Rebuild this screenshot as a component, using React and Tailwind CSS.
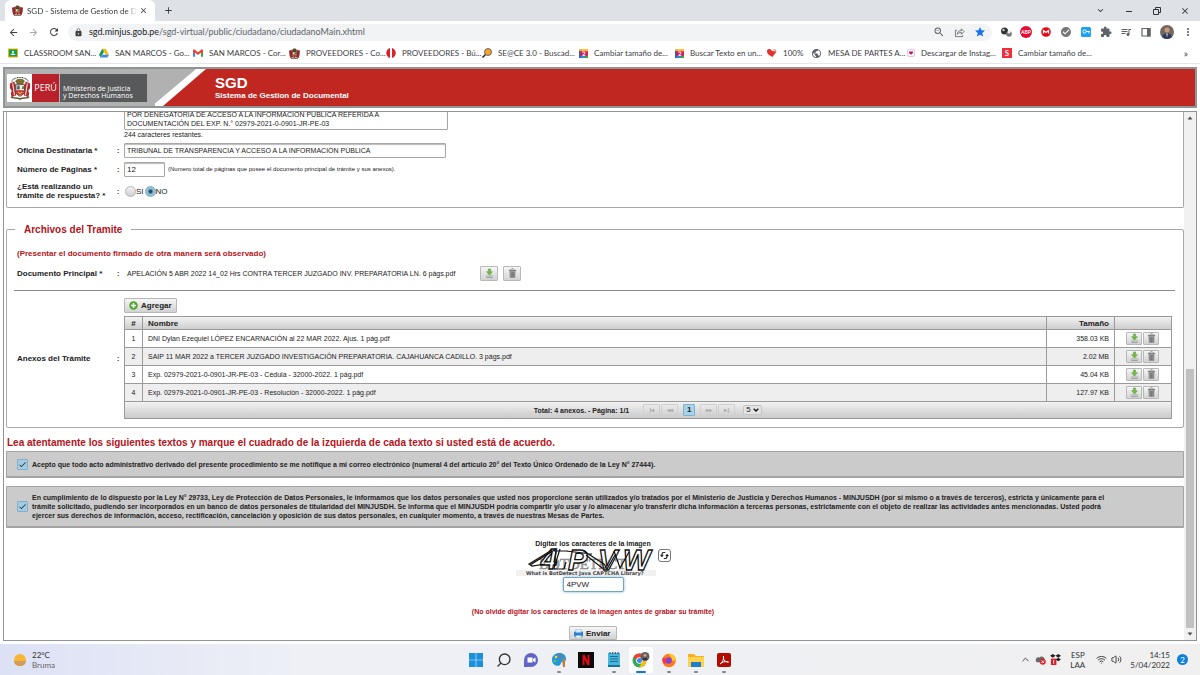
import React from "react";
import {
  MdArrowBack, MdArrowForward, MdRefresh, MdLock, MdZoomOut, MdStar, MdExtension, MdMoreVert,
  MdQueueMusic, MdAdd, MdClose, MdKeyboardArrowDown, MdPublic, MdCheckCircle, MdCheck,
} from "react-icons/md";
import { Wifi, Volume2, Search, ChevronUp } from "lucide-react";

const shine = "border border-[#b8b8b8] bg-linear-to-b from-[#f6f6f6] to-[#d2d2d2]";

function Crest({ className }) {
  return (
    <svg viewBox="0 0 24 26" className={className} aria-hidden="true">
      <path d="M3 6C5 0 19 0 21 6" fill="none" stroke="#444" strokeWidth="1.200" strokeDasharray="1.200 .6" />
      <path d="M7 6c0-4 10-4 10 0l-2 3H9z" fill="#5f6f35" />
      <path d="M9 4h6v4H9z" fill="#8a6a2c" />
      <path d="M1 8l5-2 2 15-5 2-1-4 1-3-2-3zM23 8l-5-2-2 15 5 2 1-4-1-3 2-3z" fill="#b3242b" />
      <path d="M4 8l2 13M20 8l-2 13" stroke="#e8e4df" strokeWidth="1.200" />
      <path d="M7 9h10v7c0 3-3 5-5 6-2-1-5-3-5-6z" fill="#f3efe6" stroke="#5a2f1c" strokeWidth="1" />
      <path d="M7.500 9.500H12V15H7.500z" fill="#8cb6cf" />
      <path d="M8.500 14l1-3h2v3z" fill="#7a5630" />
      <path d="M14 14l1-4 1.500 2-.5 2z" fill="#4b7b35" />
      <path d="M7.500 15.500h9c0 3-2.500 5-4.500 6-2-1-4.500-3-4.500-6z" fill="#c0272d" />
      <path d="M10 17l2 2.500 2.500-2.500" stroke="#e5b84a" strokeWidth="1.300" fill="none" />
      <path d="M2 23c4 2 6 0 10 2 4-2 6 0 10-2" stroke="#5b5b33" strokeWidth="1.600" fill="none" />
    </svg>
  );
}

function MiniCrest() {
  return (
    <svg viewBox="0 0 24 24" className="size-[11px]" aria-hidden="true">
      <path d="M7 5c0-5 10-5 10 0l-2 4H9z" fill="#5c4a26" />
      <path d="M0 6l6-2 3 16-6 2-2-6zM24 6l-6-2-3 16 6 2 2-6z" fill="#9e2a2e" />
      <path d="M7 8h10v8l-5 6-5-6z" fill="#e6d9c4" stroke="#4d2518" strokeWidth="1.800" />
      <path d="M8 14h8l-4 7z" fill="#cc2229" />
      <path d="M12 9h4v5h-4z" fill="#4f7d43" />
      <path d="M4 22c5 2 11 2 16 0" stroke="#4a4a28" strokeWidth="2" fill="none" />
    </svg>
  );
}

function DownloadGlyph() {
  return (
    <svg viewBox="0 0 12 12" className="size-[11px]" aria-hidden="true">
      <path d="M2 7.500h8v3H2z" fill="#c4c4c4" />
      <path d="M2.500 9.800h7V11h-7z" fill="#a3a3a3" />
      <path d="M4.800 1h2.400v3h2L6 7.800 2.800 4h2z" fill="#74b84a" stroke="#4f9a32" strokeWidth=".5" />
    </svg>
  );
}

function TrashGlyph() {
  return (
    <svg viewBox="0 0 12 12" className="size-[11px]" aria-hidden="true">
      <path d="M4.500 1.500c0-1 3-1 3 0" fill="none" stroke="#7d7d7d" />
      <path d="M2 1.900h8v1.300H2z" fill="#7d7d7d" />
      <path d="M2.600 3.400h6.800L9 11H3z" fill="#9a9a9a" />
      <path d="M4.500 4.500v5.500M6 4.500v5.500M7.500 4.500v5.500" stroke="#666" strokeWidth=".7" />
    </svg>
  );
}

function IconButton({ label, children, className = "h-[13px] w-4" }) {
  return (
    <button aria-label={label} className={`flex items-center justify-center rounded-[1px] ${shine} ${className}`}>
      {children}
    </button>
  );
}

const drive = (
  <svg viewBox="0 0 24 22" className="size-[10px]">
    <path d="M8 1h8l8 14h-8z" fill="#fbbc04" /><path d="M8 1l4 7-8 14-4-7z" fill="#0f9d58" /><path d="M8 15h16l-4 7H4z" fill="#4285f4" />
  </svg>
);
const gmail = (
  <svg viewBox="0 0 24 18" className="size-[10px]">
    <path d="M0 2h5v16H0z" fill="#4285f4" /><path d="M19 2h5v16h-5z" fill="#34a853" /><path d="M0 2l3-2 9 7 9-7 3 2v5l-5 4V8l-7 5.500L5 8v3L0 7z" fill="#ea4335" />
  </svg>
);
const classroom = (
  <svg viewBox="0 0 20 18" className="size-[10px]">
    <path d="M0 0h20v18H0z" fill="#f4b400" /><path d="M2 2h16v14H2z" fill="#0f9d58" /><circle cx="10" cy="7" r="2.200" fill="#fff" /><path d="M5 13c1-4 9-4 10 0z" fill="#fff" />
  </svg>
);
const osce = (
  <svg viewBox="0 0 20 20" className="size-[10px]">
    <path d="M8 0C-2 3-2 17 8 20zM12 0c10 3 10 17 0 20z" fill="#d8232a" />
  </svg>
);
const magnifier = (
  <svg viewBox="0 0 20 20" className="size-[10px]">
    <path d="M1 19l6-6" stroke="#222" strokeWidth="3" /><circle cx="12" cy="8" r="7" fill="#f2a52c" stroke="#444" strokeWidth="1.500" />
  </svg>
);
const ilove = (
  <svg viewBox="0 0 20 20" className="size-[9px]">
    <path d="M0 0h20v6H0z" fill="#fbc02d" /><path d="M0 4h5v16H0z" fill="#3a57c9" /><path d="M3 5h17v11H3z" fill="#d81b60" /><path d="M10 15h10v5H10z" fill="#43a047" /><path d="M3 15h8v5H3z" fill="#1e88e5" /><path d="M7 7h6v3L8 14h6" fill="none" stroke="#fff" strokeWidth="2" />
  </svg>
);
const heart = (
  <svg viewBox="0 0 20 20" className="size-[10px]">
    <path d="M0 7c0-6 7-6 9-2l2 1 8 1-8 11C5 15 0 12 0 7z" fill="#e5322d" /><path d="M12 4l3-2v3zM16 3l3 1-2 2z" fill="#e5322d" />
  </svg>
);
const insta = (
  <svg viewBox="0 0 20 20" className="size-[8px]">
    <rect x="1" y="1" width="18" height="18" rx="5" fill="#fff" stroke="#e58ab0" strokeWidth="1.500" /><path d="M5 8c0-4 5-3 5 0 0-3 5-4 5 0 0 3-5 6-5 6s-5-3-5-6z" fill="#c2185b" />
  </svg>
);

const bookmarks = [
  { icon: classroom, text: "CLASSROOM SAN...", w: "w-[91px]" },
  { icon: drive, text: "SAN MARCOS - Go...", w: "w-[94px]" },
  { icon: gmail, text: "SAN MARCOS - Cor...", w: "w-[96px]" },
  { icon: <MiniCrest />, text: "PROVEEDORES - Co...", w: "w-[97px]" },
  { icon: osce, text: "PROVEEDORES - Bú...", w: "w-[96px]" },
  { icon: magnifier, text: "SE@CE 3.0 - Buscad...", w: "w-[97px]" },
  { icon: ilove, text: "Cambiar tamaño de...", w: "w-[96px]" },
  { icon: ilove, text: "Buscar Texto en un...", w: "w-[92px]" },
  { icon: heart, text: "100%", w: "w-[44px]" },
  { icon: <MdPublic className="size-[11px] text-[#5f6368]" />, text: "MESA DE PARTES A...", w: "w-[96px]" },
  { icon: insta, text: "Descargar de Instag...", w: "w-[95px]" },
  { icon: <span className="flex size-[10px] items-center justify-center bg-[#ee2e3a] text-[8px] font-bold text-white">S</span>, text: "Cambiar tamaño de...", w: "w-[96px]" },
];

function Browser() {
  return (
    <header className="font-['Lato',sans-serif] text-[#3c4043]">
      <div className="flex h-[21px] bg-[#dee1e6]">
        <div className="ml-[5px] flex w-[150px] items-center rounded-t-md bg-white pl-[7px]">
          <MiniCrest />
          <span className="ml-1 w-[110px] overflow-hidden mask-r-from-90% text-[8px] leading-3 whitespace-nowrap">SGD - Sistema de Gestion de Documental</span>
          <button aria-label="Cerrar pestaña" className="ml-[2px]"><MdClose className="size-[9px]" /></button>
        </div>
        <button aria-label="Nueva pestaña" className="ml-2"><MdAdd className="size-[11px]" /></button>
        <div className="ml-auto flex items-center gap-[18px] pr-[10px] text-[#333]">
          <button aria-label="Buscar pestañas"><MdKeyboardArrowDown className="size-[11px]" /></button>
          <button aria-label="Minimizar"><svg viewBox="0 0 10 10" className="size-[10px]"><path d="M2 5.500h6" stroke="#333" /></svg></button>
          <button aria-label="Restaurar"><svg viewBox="0 0 10 10" className="size-[10px]" fill="none" stroke="#333"><path d="M1.500 3.500h5v5h-5zM3.500 3V1.500h5v5H7" /></svg></button>
          <button aria-label="Cerrar"><MdClose className="size-[10px]" /></button>
        </div>
      </div>
      <div className="flex h-[22px] items-center bg-white pr-[6px]">
        <div className="flex w-[68px] items-center gap-[9px] pl-2">
          <button aria-label="Atrás"><MdArrowBack className="size-[11px]" /></button>
          <button aria-label="Adelante"><MdArrowForward className="size-[11px] text-[#a5a8ac]" /></button>
          <button aria-label="Recargar"><MdRefresh className="size-[12px]" /></button>
        </div>
        <div className="flex h-[17px] flex-1 items-center rounded-full bg-[#f1f3f4] pr-[6px] pl-[6px]">
          <MdLock className="size-[9px]" />
          <span className="ml-[6px] text-[9px] leading-3 whitespace-nowrap text-[#5f6368]"><span className="text-[#202124]">sgd.minjus.gob.pe</span>/sgd-virtual/public/ciudadano/ciudadanoMain.xhtml</span>
          <span className="ml-auto flex items-center gap-[9px] text-[#5f6368]">
            <MdZoomOut className="size-[12px]" />
            <svg viewBox="0 0 12 12" className="size-[11px]" fill="none" stroke="currentColor" strokeWidth=".9"><path d="M3.500 3.500h-2v7h8V9M3.500 8c0-3 2-4 4.500-4V2l3 3-3 3V6C6 6 4.500 6.500 3.500 8z" /></svg>
            <MdStar className="size-[12px] text-[#1a73e8]" />
          </span>
        </div>
        <div className="ml-2 flex items-center gap-[8px] text-[#5f6368]">
          <svg viewBox="0 0 12 12" className="size-3"><circle cx="4.500" cy="5" r="3.500" fill="#333" /><circle cx="3.500" cy="4" r="1.200" fill="#ccc" /><circle cx="9" cy="8" r="2.800" fill="#777" /><circle cx="9" cy="6" r="1.500" fill="#eee" /></svg>
          <span className="flex size-3 items-center justify-center rounded-full bg-[#e40d35] text-[5px] font-bold text-white">ABP</span>
          <svg viewBox="0 0 12 12" className="size-3"><circle cx="6" cy="6" r="4.800" fill="#e50914" /><path d="M3.500 7.500v-3L6 6.500l2.500-2v3" stroke="#fff" strokeWidth="1.300" fill="none" /></svg>
          <MdCheckCircle className="size-3 text-[#777]" />
          <svg viewBox="0 0 12 12" className="size-3"><rect x="1" y="1" width="10" height="10" rx="1.500" fill="#1ba1f2" /><circle cx="4.500" cy="5.500" r="1.700" fill="none" stroke="#fff" /><path d="M6 5.500h4M9 5.500v2" stroke="#fff" /></svg>
          <MdExtension className="size-3" />
          <MdQueueMusic className="size-3" />
          <svg viewBox="0 0 12 12" className="size-3"><path d="M2 2.500h8v7.500H2z" fill="none" stroke="#5f6368" strokeWidth="1.200" /><path d="M7 2h3.500v8.500H7z" fill="#5f6368" /></svg>
          <svg viewBox="0 0 14 14" className="size-[14px]"><circle cx="7" cy="7" r="7" fill="#72685f" /><path d="M2 12c1-5 9-5 10 0-2 2.500-8 2.500-10 0z" fill="#2d3b5c" /><circle cx="7" cy="5" r="2.500" fill="#c99b7c" /><path d="M6.300 8.500h1.400l-.7 4z" fill="#fff" /></svg>
          <MdMoreVert className="size-3" />
        </div>
      </div>
      <nav className="flex h-[21px] items-center border-b border-[#e4e6e8] bg-white pl-2 text-[8px] leading-3">
        {bookmarks.map((b, i) => (
          <a key={i} href="#" className={`flex shrink-0 items-center gap-[6px] whitespace-nowrap ${b.w}`}>{b.icon}<span>{b.text}</span></a>
        ))}
        <button aria-label="Más marcadores" className="mr-3 ml-auto text-[10px]">»</button>
      </nav>
    </header>
  );
}

function Banner() {
  return (
    <div className="mx-[3px] mt-[3px] flex h-[41px] border-2 border-[#8f9596] bg-[#c02721]">
      <div className="flex w-[150px] items-center bg-[#b1b1b1] pl-[2px]">
        <span className="flex h-7 w-[25px] items-center justify-center bg-white"><Crest className="h-[26px] w-[22px]" /></span>
        <span className="flex h-7 w-[27px] items-center justify-center bg-[#b8202a] font-['Open_Sans',sans-serif] text-[9px] text-white">PERÚ</span>
        <span className="ml-px flex h-7 w-[87px] flex-col justify-end bg-[#58595b] pb-[3px] pl-[3px] font-['Open_Sans',sans-serif] text-[7px] leading-[7px] text-white"><span>Ministerio de Justicia</span><span>y Derechos Humanos</span></span>
      </div>
      <svg viewBox="0 0 56 37" className="h-[37px] w-14" preserveAspectRatio="none" aria-hidden="true">
        <path d="M0 0h56v37H0z" fill="#c02721" /><path d="M0 0h51L8 37H0z" fill="#fff" /><path d="M0 0h41L-3 37z" fill="#b1b1b1" />
      </svg>
      <div className="flex flex-col pt-[5px] pl-1 font-bold text-white">
        <h1 className="text-[15px] leading-[17px]">SGD</h1>
        <p className="text-[8px] leading-[10px]">Sistema de Gestion de Documental</p>
      </div>
    </div>
  );
}

const field = "rounded-[1px] border border-[#a8a8a8] bg-white px-[2px] text-[#222] shadow-[inset_0_1px_1px_#bbb]";

function Row({ id, label, className = "", children }) {
  return (
    <div className={`grid grid-cols-[100px_7px_1fr] items-center ${className}`}>
      <label htmlFor={id} className="text-[8px] font-bold">{label}</label>
      <span className="font-bold">:</span>
      <div className="flex items-center">{children}</div>
    </div>
  );
}

function FormPanel() {
  return (
    <section className="rounded-b-[2px] border border-t-0 border-[#a8a8a8] pb-[7px] pl-[10px]">
      <div className="-mt-[3px] ml-[107px] flex flex-col">
        <textarea aria-label="Asunto" rows={2} className={`h-[21px] w-[324px] resize-none overflow-hidden ${field}`} defaultValue={"POR DENEGATORIA DE ACCESO A LA INFORMACIÓN PÚBLICA REFERIDA A\nDOCUMENTACIÓN DEL EXP. N.° 02979-2021-0-0901-JR-PE-03"} />
        <span>244 caracteres restantes.</span>
      </div>
      <Row id="oficina" label="Oficina Destinataria *" className="mt-1"><input id="oficina" className={`h-[15px] w-[322px] ${field}`} defaultValue="TRIBUNAL DE TRANSPARENCIA Y ACCESO A LA INFORMACIÓN PÚBLICA" /></Row>
      <Row id="paginas" label="Número de Páginas *" className="mt-1"><input id="paginas" className={`h-[15px] w-[41px] text-[8px] ${field}`} defaultValue="12" /><span className="ml-[3px] text-[6px]">(Numero total de páginas que posee el documento principal de trámite y sus anexos).</span></Row>
      <Row id="resp-si" label={<>¿Está realizando un<br />trámite de respuesta? *</>} className="mt-[5px]">
        <input id="resp-si" type="radio" name="resp" className="ml-px size-[11px] appearance-none rounded-full border border-[#b5b5b5] bg-linear-to-b from-[#f4f4f4] to-[#cfcfcf]" />
        <label htmlFor="resp-si" className="text-[8px]">SI</label>
        <input id="resp-no" type="radio" name="resp" defaultChecked className="ml-px size-[11px] appearance-none rounded-full border border-[#7fa9c0] bg-[radial-gradient(circle,#244a5e_0_1px,#94c1da_3px)]" />
        <label htmlFor="resp-no" className="text-[8px]">NO</label>
      </Row>
    </section>
  );
}

const files = [
  ["DNI Dylan Ezequiel LÓPEZ ENCARNACIÓN al 22 MAR 2022. Ajus. 1 pág.pdf", "358.03 KB"],
  ["SAIP 11 MAR 2022 a TERCER JUZGADO INVESTIGACIÓN PREPARATORIA. CAJAHUANCA CADILLO. 3 págs.pdf", "2.02 MB"],
  ["Exp. 02979-2021-0-0901-JR-PE-03 - Cédula - 32000-2022. 1 pág.pdf", "45.04 KB"],
  ["Exp. 02979-2021-0-0901-JR-PE-03 - Resolución - 32000-2022. 1 pág.pdf", "127.97 KB"],
];

function FilesTable() {
  const cell = "border border-[#9a9a9a] p-0";
  const pager = "h-3 w-[17px] rounded-[1px] border border-[#cfcfcf] text-[6px] leading-none text-[#aaa]";
  return (
    <table className="w-full table-fixed border-collapse">
      <colgroup><col className="w-[18px]" /><col /><col className="w-[68px]" /><col className="w-[57px]" /></colgroup>
      <thead className="text-[8px]">
        <tr className="h-[13px] bg-linear-to-b from-[#f2f2f2] to-[#cbcbcb]">
          <th className={cell}>#</th>
          <th className={`${cell} pl-[5px] text-left`}>Nombre</th>
          <th className={`${cell} pr-[5px] text-right`}>Tamaño</th>
          <th className={cell} aria-label="Acciones"></th>
        </tr>
      </thead>
      <tbody>
        {files.map(([name, size], i) => (
          <tr key={name} className="h-[18px] even:bg-[#eeeeee]">
            <td className={`${cell} text-center`}>{i + 1}</td>
            <td className={`${cell} pl-[5px]`}>{name}</td>
            <td className={`${cell} pr-[5px] text-right`}>{size}</td>
            <td className={cell}><div className="flex gap-px pl-[11px]"><IconButton label="Descargar"><DownloadGlyph /></IconButton><IconButton label="Eliminar"><TrashGlyph /></IconButton></div></td>
          </tr>
        ))}
      </tbody>
      <tfoot>
        <tr className="h-[17px] bg-linear-to-b from-[#f2f2f2] to-[#c8c8c8]">
          <td colSpan={4} className={cell}>
            <div className="flex items-center justify-center font-bold">
              <span className="mr-[14px]">Total: 4 anexos. - Página: 1/1</span>
              {["|◂", "◂◂"].map((t) => <button key={t} disabled className={`mr-px ${pager}`}>{t}</button>)}
              <button className="mx-1 h-3 w-3 rounded-[1px] border border-[#7fb0cc] bg-[#a9d3ea] text-[8px] leading-none">1</button>
              {["▸▸", "▸|"].map((t) => <button key={t} disabled className={`ml-px ${pager}`}>{t}</button>)}
              <span className="relative ml-2 flex items-center">
                <select aria-label="Filas por página" className="h-[10px] w-[19px] appearance-none rounded-[2px] border border-[#c4c4c4] bg-[#e4e4e4] pl-[2px] text-[8px] leading-none font-normal"><option>5</option></select>
                <svg viewBox="0 0 6 4" className="pointer-events-none absolute right-[3px] h-1 w-[6px]"><path d="M.7.700L3 3 5.300.700" fill="none" stroke="#111" strokeWidth="1.400" /></svg>
              </span>
            </div>
          </td>
        </tr>
      </tfoot>
    </table>
  );
}

function FilesPanel() {
  return (
    <fieldset className="mt-[15px] min-w-0 rounded-[2px] border border-[#a8a8a8] pr-[11px] pb-2 pl-[10px]">
      <legend className="-ml-[2px] pr-[9px] pl-[9px] text-[10px] leading-[13px] font-bold text-[#b5121b]">Archivos del Tramite</legend>
      <p className="mt-[13px] text-[8px] font-bold text-[#b5121b]">(Presentar el documento firmado de otra manera será observado)</p>
      <Row label="Documento Principal *" className="mt-2">
        <span className="ml-[3px] min-w-[349px]">APELACIÓN 5 ABR 2022 14_02 Hrs CONTRA TERCER JUZGADO INV. PREPARATORIA LN. 6 págs.pdf</span>
        <IconButton label="Descargar" className="ml-1 h-[15px] w-[18px]"><DownloadGlyph /></IconButton>
        <IconButton label="Eliminar" className="ml-[5px] h-[15px] w-[18px]"><TrashGlyph /></IconButton>
      </Row>
      <hr className="mt-[9px] -mr-[3px] -ml-[3px] border-[#8c8c8c]" />
      <div className="mt-[7px] grid grid-cols-[100px_7px_minmax(0,1fr)] items-center">
        <span className="text-[8px] font-bold">Anexos del Trámite</span>
        <span className="font-bold">:</span>
        <div>
          <button className={`mb-[3px] flex h-[15px] w-[53px] items-center gap-[3px] rounded-[1px] pl-1 text-[8px] font-bold ${shine}`}>
            <svg viewBox="0 0 10 10" className="size-[9px]"><circle cx="5" cy="5" r="4.700" fill="#4fa829" /><path d="M5 2.200v5.600M2.200 5h5.600" stroke="#fff" strokeWidth="1.600" /></svg>
            Agregar
          </button>
          <FilesTable />
        </div>
      </div>
    </fieldset>
  );
}

function Consent({ id, className = "", children }) {
  return (
    <div className={`flex items-center rounded-[1px] border border-b-2 border-[#a3a3a3] bg-[#cbcbcb] px-[10px] ${className}`}>
      <span className="relative flex size-[11px] shrink-0">
        <input id={id} type="checkbox" defaultChecked className="size-[11px] appearance-none rounded-[1px] border border-[#7fb0cc] bg-[#a4cbe2]" />
        <MdCheck className="pointer-events-none absolute inset-px size-[9px] text-[#245]" />
      </span>
      <label htmlFor={id} className="ml-[4px] font-bold">{children}</label>
    </div>
  );
}

function Captcha() {
  return (
    <svg viewBox="0 0 140 28" className="h-7 w-[140px] overflow-visible" role="img" aria-label="Imagen captcha">
      <path d="M0 22h140v6H0z" fill="#f1f1f1" />
      <text x="23" y="21" fontFamily="Liberation Serif, serif" fontSize="15" fill="#aaa" stroke="#888" strokeWidth=".5">BOTDETECT</text>
      <g fontFamily="Liberation Sans, sans-serif" fontStyle="italic" fontWeight="bold" fontSize="29" fill="#fff" stroke="#111" strokeWidth="1.300">
        <text x="25" y="21">4</text><text x="52" y="22">P</text><text x="82" y="22">V</text><text x="107" y="22">W</text>
      </g>
      <path d="M36 2L13 16l3 2 13-2M14 17L40 1M44 1l-6 19M52 3l-14 0M40 3l-2 18h10l2-7M66 2l22 14 3 5 8-14M70 7l16 13h5M98 3l6 17 9-16M50 3l26 3" fill="none" stroke="#111" strokeWidth="1.200" />
      <text x="10" y="27" fontFamily="DejaVu Sans, sans-serif" fontWeight="bold" fontSize="5" fill="#444">What is BotDetect Java CAPTCHA Library?</text>
    </svg>
  );
}

function Submission() {
  return (
    <div className="flex flex-col items-center pt-[11px] pr-1">
      <label htmlFor="captcha" className="font-bold">Digitar los caracteres de la imagen</label>
      <div className="mb-px flex items-start gap-[2px]">
        <Captcha />
        <button aria-label="Cambiar imagen" className="mt-px flex size-[13px] shrink-0 items-center justify-center rounded-[3px] border border-[#777] bg-white">
          <svg viewBox="0 0 12 12" className="size-[9px]" fill="none" stroke="#222" strokeWidth="1.600"><path d="M7 2H4.500C2.500 2 2.500 4 2.500 7M5 10h2.500c2 0 2-2 2-5" /><path d="M.5 5.500l2 2.500 2-2.500zM7.500 6.500l2-2.500 2 2.500z" fill="#222" strokeWidth=".5" /></svg>
        </button>
      </div>
      <input id="captcha" defaultValue="4PVW" className="h-[15px] w-[61px] rounded-[2px] border border-[#6fa5c4] bg-white px-[3px] text-[8px] text-[#222] shadow-[0_0_3px_#85b2cb]" />
      <p className="mt-[15px] font-bold text-[#b5121b]">(No olvide digitar los caracteres de la imagen antes de grabar su trámite)</p>
      <button className={`mt-[10px] flex h-[14px] w-12 shrink-0 items-center gap-[3px] rounded-[1px] pl-1 text-[8px] font-bold ${shine}`}>
        <svg viewBox="0 0 10 10" className="size-[9px]"><path d="M0 3h10v5H0z" fill="#2f7fd0" /><path d="M2 0h6v4H2z" fill="#dcebf8" stroke="#6fa6dd" strokeWidth=".5" /><path d="M2 7h6v3H2z" fill="#fff" stroke="#2f7fd0" strokeWidth=".6" /></svg>
        Enviar
      </button>
    </div>
  );
}

function Scrollbar() {
  return (
    <div className="flex w-3 shrink-0 flex-col items-center bg-[#f1f1f1]" aria-hidden="true">
      <svg viewBox="0 0 12 12" className="size-3"><path d="M3.500 7.500L6 4.500l2.500 3z" fill="#505050" /></svg>
      <div className="flex-1" />
      <div className="h-[49%] w-2 bg-[#c1c1c1]" />
      <svg viewBox="0 0 12 12" className="size-3"><path d="M3.500 4.500L6 7.500l2.500-3z" fill="#505050" /></svg>
    </div>
  );
}

function AppSlot({ children, label, state = "" }) {
  const bar = state === "active" ? "bg-[#0f78d4] w-[10px]" : state === "open" ? "bg-[#888] w-1" : "w-1";
  return (
    <button aria-label={label} className={`flex h-[26px] w-[24px] flex-col items-center justify-end gap-[3px] rounded-[3px] ${state === "active" ? "bg-white" : ""}`}>
      {children}
      <span className={`h-[2px] rounded-full ${bar}`} />
    </button>
  );
}

function Taskbar() {
  const s = "size-4";
  return (
    <footer className="mt-[3px] grid h-[31px] shrink-0 grid-cols-[1fr_auto_1fr] items-center bg-linear-to-r from-[#dde1f5] via-[#eef0f6] via-25% to-[#f0f0f0] font-['Lato',sans-serif] text-[8px] leading-[10px] text-[#333]">
      <div className="flex items-center gap-[5px] pl-[13px]">
        <svg viewBox="0 0 14 14" className="size-[14px]"><circle cx="7" cy="7" r="6" fill="#f8b633" /><path d="M1 8h12c0 3-3 5-6 5S1 11 1 8z" fill="#d99a4a" /><path d="M2 10h10" stroke="#b8a48c" /></svg>
        <div><div>22°C</div><div className="text-[#666]">Bruma</div></div>
      </div>
      <div className="flex w-[272px] items-center justify-between">
        <AppSlot label="Inicio"><svg viewBox="0 0 16 16" className={s}><path d="M1 1h6.700v6.700H1zM8.300 1H15v6.700H8.300zM1 8.300h6.700V15H1zM8.300 8.300H15V15H8.300z" fill="#1a91dd" /></svg></AppSlot>
        <AppSlot label="Buscar"><Search className="size-4 -scale-x-100" strokeWidth={2} /></AppSlot>
        <AppSlot label="Chat"><svg viewBox="0 0 16 16" className={s}><circle cx="8" cy="8" r="7" fill="#6264c7" /><path d="M1 9v6h6z" fill="#6264c7" /><path d="M4.500 5.500h5v5h-5zM10 7l2.500-1.500v5L10 9z" fill="#fff" /></svg></AppSlot>
        <AppSlot label="Paint" state="open"><svg viewBox="0 0 16 16" className={s}><path d="M1 8c0-9 14-9 14-1 0 4-4 1-5 4-1 5-9 3-9-3z" fill="#2597d8" /><circle cx="5" cy="5" r="1.300" fill="#f5d33a" /><circle cx="9" cy="4" r="1.300" fill="#e94f3d" /><circle cx="4" cy="9" r="1.300" fill="#63c34b" /><path d="M11 7h3v8h-2z" fill="#c57a3b" /></svg></AppSlot>
        <AppSlot label="Netflix"><svg viewBox="0 0 16 16" className={s}><path d="M0 0h16v16H0z" fill="#0b0b0b" /><path d="M5.500 13V3l5 10V3" fill="none" stroke="#e50914" strokeWidth="2" /></svg></AppSlot>
        <AppSlot label="Bloc de notas" state="open"><svg viewBox="0 0 16 16" className={s}><path d="M2 1h12v14H2z" fill="#45b6dc" /><path d="M2 13h12v2H2z" fill="#1d6f9c" /><path d="M4 4.500h8M4 7h8M4 9.500h8" stroke="#1c6f96" /><path d="M4 0v2M6.700 0v2M9.300 0v2M12 0v2" stroke="#345" /></svg></AppSlot>
        <AppSlot label="Chrome" state="active"><svg viewBox="0 0 18 16" className="h-4 w-[18px]"><circle cx="7.500" cy="8.500" r="7" fill="#34a853" /><path d="M1.500 5a7 7 0 0 1 12.500 1H7.500v5z" fill="#ea4335" /><path d="M14 6a7 7 0 0 1-7 9.500l3.500-6z" fill="#fbbc05" /><circle cx="7.500" cy="8.500" r="3.300" fill="#fff" /><circle cx="7.500" cy="8.500" r="2.500" fill="#4285f4" /><circle cx="13" cy="4.500" r="4.500" fill="#675f5c" /><circle cx="13" cy="3.300" r="1.500" fill="#cfa184" /><path d="M10.500 8c.5-3 4.500-3 5 0z" fill="#26355a" /></svg></AppSlot>
        <AppSlot label="Firefox" state="open"><svg viewBox="0 0 16 16" className={s}><circle cx="8" cy="8.500" r="6.800" fill="#ff7a1a" /><path d="M8 1.500c5 0 7 4 7 7h-4c0-4-3-4-3-7z" fill="#ffc928" /><circle cx="7.500" cy="8.500" r="3.300" fill="#8543d6" /><path d="M1.500 6c1 0 3 0 4 1.500L4 12c-2-1-3-4-2.500-6z" fill="#f5334c" /></svg></AppSlot>
        <AppSlot label="Explorador" state="open"><svg viewBox="0 0 16 16" className={s}><path d="M0 2h6l2 2h8v11H0z" fill="#f2b223" /><path d="M0 5h16v10H0z" fill="#ffd34f" /><path d="M3 10h10v5H3z" fill="#1d7fcc" /></svg></AppSlot>
        <AppSlot label="Acrobat" state="open"><svg viewBox="0 0 16 16" className={s}><rect x="1" y="1" width="14" height="14" rx="2" fill="#b30b00" /><path d="M4 12c3-2 4-5 3.500-8C7 8 9 10 12.500 10 9 9 6 10 4 12z" fill="none" stroke="#fff" /></svg></AppSlot>
      </div>
      <div className="flex items-center justify-end pr-3 text-center">
        <ChevronUp className="size-[11px]" />
        <svg viewBox="0 0 12 12" className="ml-1 size-[11px]"><path d="M1 8c-1-4 3-5 4-4 2-3 6 0 6 3v2H2z" fill="#666" /><circle cx="8.500" cy="8.500" r="3.300" fill="#dc2a34" /><path d="M7.200 7.200l2.600 2.600m0-2.600L7.200 9.800" stroke="#fff" /></svg>
        <svg viewBox="0 0 12 12" className="ml-1 size-[11px]"><path d="M3 0l3 2-3 2-3-2zM9 0l3 2-3 2-3-2zM9 4l3 2-3 2-3-2z" fill="#222" /><path d="M1 5h6v7H1z" fill="#d8202d" /><path d="M4 6.500v4" stroke="#fff" /></svg>
        <div className="ml-[9px]"><div>ESP</div><div>LAA</div></div>
        <Wifi className="ml-[11px] size-[11px]" />
        <Volume2 className="ml-1 size-[11px]" />
        <div className="ml-2 text-right"><div>14:15</div><div>5/04/2022</div></div>
        <span className="ml-[7px] flex size-[11px] items-center justify-center rounded-full bg-[#0f7fd8] text-white">2</span>
      </div>
    </footer>
  );
}

export default function App() {
  return (
    <div className="flex h-screen flex-col overflow-hidden bg-white font-['Liberation_Sans',Arial,sans-serif] text-[7px] leading-[9px] text-[#222]">
      <Browser />
      <Banner />
      <main className="mx-[3px] mt-[3px] flex min-h-0 flex-1 overflow-hidden border border-[#8f9596]">
        <div className="min-w-0 flex-1 overflow-hidden pl-[2px]">
          <FormPanel />
          <FilesPanel />
          <h2 className="mt-[9px] ml-px text-[10px] leading-[12px] font-bold text-[#b5121b]">Lea atentamente los siguientes textos y marque el cuadrado de la izquierda de cada texto si usted está de acuerdo.</h2>
          <Consent id="acepto" className="mt-[2px] h-[27px]">Acepto que todo acto administrativo derivado del presente procedimiento se me notifique a mi correo electrónico (numeral 4 del artículo 20° del Texto Único Ordenado de la Ley N° 27444).</Consent>
          <Consent id="datos" className="mt-2 py-[6px]">En cumplimiento de lo dispuesto por la Ley N° 29733, Ley de Protección de Datos Personales, le informamos que los datos personales que usted nos proporcione serán utilizados y/o tratados por el Ministerio de Justicia y Derechos Humanos - MINJUSDH (por sí mismo o a través de terceros), estricta y únicamente para el<br />trámite solicitado, pudiendo ser incorporados en un banco de datos personales de titularidad del MINJUSDH. Se informa que el MINJUSDH podría compartir y/o usar y /o almacenar y/o transferir dicha información a terceras personas, estrictamente con el objeto de realizar las actividades antes mencionadas. Usted podrá<br />ejercer sus derechos de información, acceso, rectificación, cancelación y oposición de sus datos personales, en cualquier momento, a través de nuestras Mesas de Partes.</Consent>
          <Submission />
        </div>
        <Scrollbar />
      </main>
      <Taskbar />
    </div>
  );
}
